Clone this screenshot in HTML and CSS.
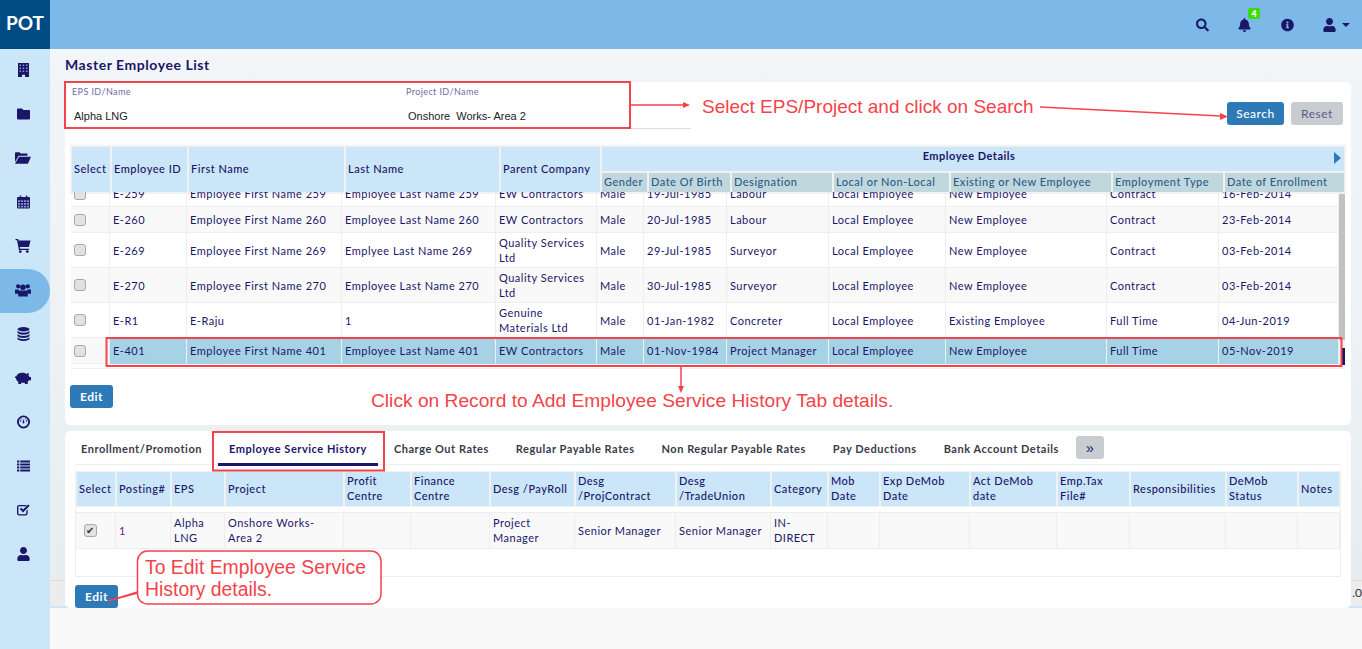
FILE: index.html
```html
<!DOCTYPE html>
<html lang="en">
<head>
<meta charset="utf-8">
<title>Master Employee List</title>
<link rel="stylesheet" href="styles.css">
</head>
<body>
<div class="app">
  <aside class="sidebar">
    <div class="logo">POT</div>
    <nav class="nav">
      <div class="nav-item"><svg class="ico narrow" viewBox="0 0 11 14"><path d="M0 0h11v14H7v-2.200H4V14H0z"/><path class="cut" d="M1.500 1.500h1.500v1.500H1.500zM4.700 1.500h1.500v1.500H4.700zM8 1.500h1.500v1.500H8zM1.500 4.500h1.500v1.500H1.500zM4.700 4.500h1.500v1.500H4.700zM8 4.500h1.500v1.500H8zM1.500 7.500h1.500v1.500H1.500zM4.700 7.500h1.500v1.500H4.700zM8 7.500h1.500v1.500H8z"/></svg></div>
      <div class="nav-item"><svg class="ico" viewBox="0 0 13 11"><path d="M1 0h4l1.500 1.500H12a1 1 0 0 1 1 1V10a1 1 0 0 1-1 1H1a1 1 0 0 1-1-1V1a1 1 0 0 1 1-1z"/></svg></div>
      <div class="nav-item"><svg class="ico wide" viewBox="0 0 18 13"><path d="M1 0h4l1.500 1.500H14V4H4L0 11V1a1 1 0 0 1 1-1z"/><path d="M4.500 5H18l-3.500 8H0z"/></svg></div>
      <div class="nav-item"><svg class="ico" viewBox="0 0 14 14"><path d="M3 0h1.500v1.500h5V0H11v1.500h2a1 1 0 0 1 1 1V13a1 1 0 0 1-1 1H1a1 1 0 0 1-1-1V2.500a1 1 0 0 1 1-1h2z"/><path class="cut" d="M1 5h2.500v2H1zM4.400 5h2.200v2H4.400zM7.500 5h2.200v2H7.500zM10.500 5H13v2h-2.500zM1 8h2.500v2H1zM4.400 8h2.200v2H4.400zM7.500 8h2.200v2H7.500zM10.500 8H13v2h-2.500zM1 11h2.500v2H1zM4.400 11h2.200v2H4.400zM7.500 11h2.200v2H7.500zM10.500 11H13v2h-2.500z"/></svg></div>
      <div class="nav-item"><svg class="ico wide" viewBox="0 0 14 13"><path d="M0 0h2.500l.5 1.500H14l-1.500 6H4l.3 1.500h8.200v1.200H3.200L1.500 1.200H0z"/><circle cx="4.500" cy="11.700" r="1.300"/><circle cx="11" cy="11.700" r="1.300"/></svg></div>
      <div class="nav-item active"><svg class="ico wide" viewBox="0 0 15 12"><circle cx="3" cy="2.500" r="2"/><circle cx="12" cy="2.500" r="2"/><circle cx="7.500" cy="3.500" r="2.600"/><path d="M0 5.500h3.500L3 9.500H0zM11.500 5.500H15v4h-3zM4 6.500h7a1 1 0 0 1 1 1V12H3V7.500a1 1 0 0 1 1-1z"/></svg></div>
      <div class="nav-item"><svg class="ico" viewBox="0 0 12 14"><ellipse cx="6" cy="2.200" rx="6" ry="2.200"/><path d="M0 3.800c1 1.300 3 2 6 2s5-.7 6-2v2c-1 1.300-3 2-6 2s-5-.7-6-2zM0 7c1 1.300 3 2 6 2s5-.7 6-2v2c-1 1.300-3 2-6 2s-5-.7-6-2zM0 10.200c1 1.300 3 2 6 2s5-.7 6-2v1.600c0 1.300-3 2.200-6 2.200s-6-.9-6-2.200z"/></svg></div>
      <div class="nav-item"><svg class="ico wide" viewBox="0 0 17 13"><path d="M7.500 1c2 0 3.500.6 4.500 1.300L14.500 1v3l1 1.500H17V9h-2l-1.500 1.500V13h-3v-1.500h-4V13h-3v-2.500C1.800 9.500 1 8 1 6.500H0V5h1.300C2 2.500 4.500 1 7.500 1z"/></svg></div>
      <div class="nav-item"><svg class="ico" viewBox="0 0 14 14"><circle cx="7" cy="7" r="6" fill="none" stroke="#1a1668" stroke-width="2"/><path d="M6 7.500l1-4 1 4a1 1 0 1 1-2 0z"/><circle cx="3.800" cy="6" r=".8"/><circle cx="10.200" cy="6" r=".8"/><circle cx="5" cy="3.800" r=".6"/><circle cx="9" cy="3.800" r=".6"/></svg></div>
      <div class="nav-item"><svg class="ico" viewBox="0 0 14 12"><path d="M0 0h2.500v2.200H0zM3.500 0H14v2.200H3.500zM0 3.300h2.500v2.200H0zM3.500 3.300H14v2.200H3.500zM0 6.500h2.500v2.200H0zM3.500 6.500H14v2.200H3.500zM0 9.800h2.500V12H0zM3.500 9.800H14V12H3.500z"/></svg></div>
      <div class="nav-item"><svg class="ico" viewBox="0 0 14 13"><path d="M2.500 1H10v1.500H2.500a1 1 0 0 0-1 1v6.500a1 1 0 0 0 1 1H9a1 1 0 0 0 1-1V7.500l1.500-1.500v4a2.500 2.500 0 0 1-2.500 2.500H2.500A2.500 2.500 0 0 1 0 10V3.500A2.500 2.500 0 0 1 2.500 1z"/><path d="M3 5.500l1.500-1.500 2 2L12 .5 13.700 2 6.500 9.200z"/></svg></div>
      <div class="nav-item"><svg class="ico" viewBox="0 0 448 512"><path d="M224 256c70.700 0 128-57.300 128-128S294.700 0 224 0 96 57.300 96 128s57.300 128 128 128zm89.600 32h-16.700c-22.200 10.200-46.900 16-72.900 16s-50.600-5.800-72.900-16h-16.700C60.200 288 0 348.200 0 422.400V464c0 26.500 21.500 48 48 48h352c26.500 0 48-21.500 48-48v-41.600c0-74.200-60.200-134.400-134.400-134.400z"/></svg></div>
    </nav>
  </aside>

  <div class="main">
    <header class="topbar">
      <svg class="top-ico" viewBox="0 0 512 512"><path d="M505 442.700L405.300 343c-4.500-4.500-10.600-7-17-7H372c27.600-35.300 44-79.700 44-128C416 93.100 322.900 0 208 0S0 93.100 0 208s93.100 208 208 208c48.300 0 92.700-16.400 128-44v16.300c0 6.400 2.500 12.500 7 17l99.700 99.700c9.400 9.400 24.600 9.400 33.900 0l28.300-28.300c9.400-9.400 9.400-24.600.1-34zM208 336c-70.700 0-128-57.200-128-128 0-70.700 57.200-128 128-128 70.700 0 128 57.200 128 128 0 70.700-57.200 128-128 128z"/></svg>
      <span class="bell">
        <svg class="top-ico" viewBox="0 0 448 512"><path d="M224 512c35.320 0 63.970-28.650 63.970-64H160.030c0 35.350 28.650 64 63.970 64zm215.390-149.710c-19.320-20.760-55.470-51.990-55.470-154.290 0-77.700-54.480-139.900-127.940-155.160V32c0-17.670-14.320-32-31.980-32s-31.980 14.330-31.980 32v20.840C118.560 68.100 64.080 130.300 64.080 208c0 102.300-36.150 133.530-55.470 154.290-6 6.450-8.660 14.160-8.610 21.710.11 16.400 12.980 32 32.100 32h383.800c19.120 0 32-15.600 32.100-32 .05-7.550-2.610-15.270-8.610-21.710z"/></svg>
        <span class="badge">4</span>
      </span>
      <svg class="top-ico" viewBox="0 0 512 512"><path d="M256 8C119 8 8 119 8 256s111 248 248 248 248-111 248-248S393 8 256 8zm0 110c23.200 0 42 18.800 42 42s-18.800 42-42 42-42-18.800-42-42 18.800-42 42-42zm56 254c0 6.600-5.400 12-12 12h-88c-6.600 0-12-5.400-12-12v-24c0-6.600 5.400-12 12-12h12v-64h-12c-6.600 0-12-5.400-12-12v-24c0-6.600 5.400-12 12-12h64c6.600 0 12 5.400 12 12v100h12c6.600 0 12 5.400 12 12v24z"/></svg>
      <span class="user-menu">
        <svg class="top-ico" viewBox="0 0 448 512"><path d="M224 256c70.700 0 128-57.300 128-128S294.700 0 224 0 96 57.300 96 128s57.300 128 128 128zm89.600 32h-16.700c-22.200 10.200-46.900 16-72.900 16s-50.600-5.800-72.900-16h-16.700C60.200 288 0 348.200 0 422.400V464c0 26.500 21.500 48 48 48h352c26.500 0 48-21.500 48-48v-41.600c0-74.200-60.200-134.400-134.400-134.400z"/></svg>
        <span class="caret"></span>
      </span>
    </header>

    <div class="content">
      <div class="footer-strip"><span class="ver">.0</span></div>
      <h1 class="page-title">Master Employee List</h1>

      <section class="card card-top">
        <div class="search-row">
          <div class="fields">
            <div class="field"><label>EPS ID/Name</label><div class="value">Alpha LNG</div></div>
            <div class="field"><label>Project ID/Name</label><div class="value">Onshore&nbsp; Works- Area 2</div></div>
          </div>
          <div class="actions">
            <button class="btn btn-primary btn-search">Search</button>
            <button class="btn btn-muted">Reset</button>
          </div>
        </div>

        <div class="grid">
          <table class="emp-head">
            <colgroup><col class="h1"><col class="h2"><col class="h3"><col class="h4"><col class="h5"><col class="h6"><col class="h7"><col class="h8"><col class="h9"><col class="h10"><col class="h11"><col class="h12"></colgroup>
            <tr class="h-top">
              <th rowspan="2">Select</th><th rowspan="2">Employee ID</th><th rowspan="2">First Name</th><th rowspan="2">Last Name</th><th rowspan="2">Parent Company</th>
              <th colspan="7" class="group">Employee Details<span class="tri"></span></th>
            </tr>
            <tr class="h-sub">
              <th>Gender</th><th>Date Of Birth</th><th>Designation</th><th>Local or Non-Local</th><th>Existing or New Employee</th><th>Employment Type</th><th>Date of Enrollment</th>
            </tr>
          </table>
          <div class="body-wrap">
            <div class="body-clip">
              <table class="emp-body">
                <colgroup><col class="b1"><col class="b2"><col class="b3"><col class="b4"><col class="b5"><col class="b6"><col class="b7"><col class="b8"><col class="b9"><col class="b10"><col class="b11"><col class="b12"></colgroup>
                <tr><td><span class="cb"></span></td><td>E-259</td><td>Employee First Name 259</td><td>Employee Last Name 259</td><td>EW Contractors</td><td>Male</td><td>19-Jul-1985</td><td>Labour</td><td>Local Employee</td><td>New Employee</td><td>Contract</td><td>16-Feb-2014</td></tr>
                <tr class="alt"><td><span class="cb"></span></td><td>E-260</td><td>Employee First Name 260</td><td>Employee Last Name 260</td><td>EW Contractors</td><td>Male</td><td>20-Jul-1985</td><td>Labour</td><td>Local Employee</td><td>New Employee</td><td>Contract</td><td>23-Feb-2014</td></tr>
                <tr><td><span class="cb"></span></td><td>E-269</td><td>Employee First Name 269</td><td>Emplyee Last Name 269</td><td>Quality Services Ltd</td><td>Male</td><td>29-Jul-1985</td><td>Surveyor</td><td>Local Employee</td><td>New Employee</td><td>Contract</td><td>03-Feb-2014</td></tr>
                <tr class="alt"><td><span class="cb"></span></td><td>E-270</td><td>Employee First Name 270</td><td>Employee Last Name 270</td><td>Quality Services Ltd</td><td>Male</td><td>30-Jul-1985</td><td>Surveyor</td><td>Local Employee</td><td>New Employee</td><td>Contract</td><td>03-Feb-2014</td></tr>
                <tr><td><span class="cb"></span></td><td>E-R1</td><td>E-Raju</td><td>1</td><td>Genuine Materials Ltd</td><td>Male</td><td>01-Jan-1982</td><td>Concreter</td><td>Local Employee</td><td>Existing Employee</td><td>Full Time</td><td>04-Jun-2019</td></tr>
                <tr class="sel"><td><span class="cb"></span></td><td>E-401</td><td>Employee First Name 401</td><td>Employee Last Name 401</td><td>EW Contractors</td><td>Male</td><td>01-Nov-1984</td><td>Project Manager</td><td>Local Employee</td><td>New Employee</td><td>Full Time</td><td>05-Nov-2019</td></tr>
              </table>
            </div>
            <div class="scrollbar"><div class="thumb"></div><div class="dark"></div></div>
          </div>
        </div>
        <button class="btn btn-primary btn-edit">Edit</button>
      </section>

      <section class="card card-bottom">
        <div class="tabs">
          <span class="tab t1">Enrollment/Promotion</span>
          <span class="tab t2 active">Employee Service History</span>
          <span class="tab t3">Charge Out Rates</span>
          <span class="tab t4">Regular Payable Rates</span>
          <span class="tab t5">Non Regular Payable Rates</span>
          <span class="tab t6">Pay Deductions</span>
          <span class="tab t7">Bank Account Details</span>
          <button class="more">»</button>
        </div>
        <div class="hist-box">
          <table class="hist">
            <colgroup><col class="s1"><col class="s2"><col class="s3"><col class="s4"><col class="s5"><col class="s6"><col class="s7"><col class="s8"><col class="s9"><col class="s10"><col class="s11"><col class="s12"><col class="s13"><col class="s14"><col class="s15"><col class="s16"><col class="s17"></colgroup>
            <tr class="hist-head">
              <th>Select</th><th>Posting#</th><th>EPS</th><th>Project</th><th>Profit Centre</th><th>Finance Centre</th><th>Desg /PayRoll</th><th>Desg /ProjContract</th><th>Desg /TradeUnion</th><th>Category</th><th>Mob Date</th><th>Exp DeMob Date</th><th>Act DeMob date</th><th>Emp.Tax File#</th><th>Responsibilities</th><th>DeMob Status</th><th>Notes</th>
            </tr>
            <tr class="hist-gap"><td colspan="17"></td></tr>
            <tr class="hist-row">
              <td><span class="cb checked">✔</span></td><td class="num">1</td><td>Alpha LNG</td><td>Onshore Works-<br>Area 2</td><td></td><td></td><td>Project Manager</td><td>Senior Manager</td><td>Senior Manager</td><td>IN-DIRECT</td><td></td><td></td><td></td><td></td><td></td><td></td><td></td>
            </tr>
          </table>
        </div>
        <button class="btn btn-primary btn-edit2">Edit</button>
      </section>
    </div>
  </div>

  <svg class="marks" viewBox="0 0 1362 649" width="1362" height="649">
    <g fill="none" stroke="#f4434b" stroke-width="2">
      <rect x="65" y="82" width="565" height="46"/>
      <rect x="106.500" y="338" width="1235" height="28"/>
      <rect x="213" y="432" width="171" height="38.500"/>
    </g>
    <g fill="none" stroke="#f4434b" stroke-width="1.500">
      <path d="M631 105H684"/>
      <path d="M1040 107L1221 116"/>
      <path d="M681 367V386"/>
      <path fill="#fff" d="M147.500 551H371a10 10 0 0 1 10 10V594a10 10 0 0 1-10 10H147.500a10 10 0 0 1-10-10V593L108 601 137.500 592V561a10 10 0 0 1 10-10z"/>
    </g>
    <g fill="#f4434b">
      <path d="M690 105L683 102V108z"/>
      <path d="M1228 116.500L1220 113V120z"/>
      <path d="M681 393L678 386H684z"/>
    </g>
  </svg>
  <div class="note note-search">Select EPS/Project and click on Search</div>
  <div class="note note-record">Click on Record to Add Employee Service History Tab details.</div>
  <div class="note note-edit">To Edit Employee Service History details.</div>
</div>
</body>
</html>
```
FILE: styles.css
```css
* { box-sizing: border-box; }
html, body { margin: 0; height: 649px; overflow: hidden; }
body { font-family: Lato, "Liberation Sans", sans-serif; color: #1a1668; background: #f9f9f9; }
.app { display: flex; width: 1362px; height: 649px; position: relative; overflow: hidden; }

.sidebar { width: 50px; flex: none; background: #cbe5f9; }
.logo { height: 49px; background: #004b84; color: #fff; font-weight: 700; font-size: 19px; line-height: 46px; text-align: center; }
.nav { display: flex; flex-direction: column; }
.nav-item { height: 44px; display: flex; align-items: center; justify-content: center; padding: 0 4px 2px 0; }
.nav-item.active { background: #7cb8e8; border-radius: 0 22px 22px 0; }
.ico { width: 13px; height: 14px; fill: #1a1668; }
.ico.wide { width: 16px; }
.ico.narrow { width: 11px; }
.ico .cut { fill: #8b93c8; }

.main { flex: 1; display: flex; flex-direction: column; min-width: 0; }
.topbar { height: 49px; flex: none; background: #7cb8e8; display: flex; align-items: center; justify-content: flex-end; padding-right: 12px; }
.top-ico { width: 13px; height: 14px; fill: #1a1668; display: block; }
.topbar > .top-ico:first-child { margin-right: 29px; }
.bell { position: relative; margin-right: 30px; }
.badge { position: absolute; left: 10px; top: -10px; width: 12px; height: 11px; border-radius: 2px; background: #3bdc0e; color: #fff; font-size: 9px; font-weight: 900; line-height: 11px; text-align: center; }
.user-menu { display: flex; align-items: center; gap: 6px; margin-left: 29px; }
.caret { width: 0; height: 0; border-left: 4px solid transparent; border-right: 4px solid transparent; border-top: 4px solid #1a1668; }

.content { height: 559px; padding: 0 11px 0 15px; background: linear-gradient(#f3f6f9, #e7edef); position: relative; }
.footer-strip { position: absolute; left: 0; right: 0; top: 531px; height: 28px; background: #ececec; border-bottom: 2px solid #cbe5f9; border-top: 1px solid #ddd; }
.ver { position: absolute; right: 0; top: 4px; font-size: 12px; color: #333; }
.page-title { margin: 0; height: 33px; padding-top: 7px; font-size: 14px; line-height: 17px; font-weight: 700; letter-spacing: .55px; color: #1a1668; }

.card { background: #fff; border-radius: 5px; position: relative; }
.card-top { height: 343px; padding: 0 6px; }
.card-bottom { height: 177px; margin-top: 6px; padding: 0 10px; }

.search-row { height: 63px; display: flex; justify-content: space-between; }
.fields { width: 619px; height: 47px; display: flex; border-bottom: 1px solid #ddd; margin-left: 1px; }
.field { width: 334px; flex: none; padding-top: 4px; }
.field label { display: block; font-size: 9px; line-height: 11px; letter-spacing: .4px; color: #6f6aa4; }
.value { font-family: "Liberation Sans", Arial, sans-serif; font-size: 11px; line-height: 13px; margin-top: 13px; padding-left: 2px; color: #222; }
.actions { display: flex; gap: 7px; padding-top: 20px; padding-right: 2px; }
.btn { border: 0; border-radius: 3px; font-family: Lato, sans-serif; font-size: 12px; letter-spacing: .5px; height: 23px; padding: 0; }
.btn-primary { background: #2e7ab6; color: #fff; font-weight: 700; }
.btn-search { width: 57px; font-weight: 500; }
.btn-muted { background: #c9ccd1; color: #5c5a86; width: 52px; }
.btn-edit { width: 43px; margin: 16px 0 0 -1px; }
.btn-edit2 { width: 43px; }

table { border-collapse: separate; table-layout: fixed; }
th, td { overflow: hidden; text-align: left; }

.grid { width: 1274px; }
.emp-head { width: 1276px; margin-left: -1px; border-spacing: 2px; background: #f1f1f1; }
.h1 { width: 38px; } .h2 { width: 75px; } .h3 { width: 155px; } .h4 { width: 153px; } .h5 { width: 99px; }
.h6 { width: 45px; } .h7 { width: 81px; } .h8 { width: 100px; } .h9 { width: 115px; } .h10 { width: 160px; } .h11 { width: 110px; } .h12 { width: 119px; }
.emp-head th { font-size: 11px; line-height: 14px; letter-spacing: .5px; font-weight: 500; padding: 0 2px 2px; white-space: nowrap; }
.h-top th { background: #cbe5f9; height: 24px; color: #1a1668; }
.emp-head .group { font-weight: 700; font-size: 11px; vertical-align: top; padding: 2px 8px 0 0; text-align: center; position: relative; }
.tri { position: absolute; right: 3px; top: 5px; width: 0; height: 0; border-top: 6.500px solid transparent; border-bottom: 6.500px solid transparent; border-left: 7px solid #2e7ab6; }
.h-sub th { background: #c1d7de; height: 19px; color: #2c5d86; }

.body-wrap { display: flex; height: 177px; border-bottom: 1px solid #eee; margin-top: -2px; position: relative; }
.body-clip { width: 1268px; overflow: hidden; }
.emp-body { width: 1268px; border-spacing: 0; margin-top: -11px; }
.b1 { width: 39px; } .b2 { width: 77px; } .b3 { width: 155px; } .b4 { width: 154px; } .b5 { width: 101px; }
.b6 { width: 47px; } .b7 { width: 83px; } .b8 { width: 102px; } .b9 { width: 117px; } .b10 { width: 161px; } .b11 { width: 112px; } .b12 { width: 120px; }
.emp-body td { font-size: 11px; line-height: 15px; letter-spacing: .5px; padding: 2px 3px; height: 26px; border-bottom: 1px solid #eee; border-right: 1px solid #eee; color: #1a1668; }
.alt td { background: #f9f9f9; }
.emp-body .sel td { background: #a6d2e6; border-right-color: #e8f3f8; border-bottom-color: #a6d2e6; }
.emp-body .sel td:first-child { background: #f9f9f9; border-right-color: #eee; border-bottom-color: #eee; }
.cb { display: block; width: 12px; height: 12px; border: 1px solid #a9a9a9; border-radius: 3px; background: #e2e2e2; }
.cb.checked { color: #333; font-size: 10px; line-height: 11px; text-align: center; width: 13px; height: 13px; margin-left: 5px; }
.scrollbar { width: 6px; flex: none; background: #f1f1f1; position: relative; }
.thumb { position: absolute; left: 0; right: 0; top: 2px; height: 146px; background: #c1c1c1; }
.dark { position: absolute; left: 2px; right: 0; top: 156px; height: 17px; background: #1a1668; }

.tabs { height: 34px; display: flex; align-items: flex-start; border-bottom: 1px solid #eee; position: relative; }
.tab { font-size: 11px; line-height: 14px; letter-spacing: .53px; font-weight: 700; color: #3a3a4a; margin: 11px 0 0 27px; white-space: nowrap; }
.tab.t1 { margin-left: 6px; }
.tab.active { color: #1a1668; }
.tab.active::after { content: ""; position: absolute; left: 143px; top: 32px; width: 160px; height: 3px; background: #1a1668; }
.more { width: 28px; height: 23px; margin-left: 17px; margin-top: 5px; border: 0; border-radius: 3px; background: #c9ccd1; color: #1a1668; font-size: 14px; line-height: 18px; padding: 0; }

.hist-box { margin-top: 6px; width: 1266px; height: 106px; border: 1px solid #eee; border-top: 0; margin-bottom: 8px; }
.hist { width: 1264px; border-spacing: 0; }
.s1 { width: 40px; } .s2 { width: 55px; } .s3 { width: 54px; } .s4 { width: 119px; } .s5 { width: 67px; } .s6 { width: 79px; } .s7 { width: 85px; } .s8 { width: 101px; } .s9 { width: 95px; } .s10 { width: 57px; } .s11 { width: 52px; } .s12 { width: 90px; } .s13 { width: 87px; } .s14 { width: 73px; } .s15 { width: 96px; } .s16 { width: 72px; } .s17 { width: 42px; }
.hist th { background: #cbe5f9; font-size: 11px; line-height: 15px; letter-spacing: .5px; font-weight: 500; height: 36px; padding: 0 2px 2px; border: 1px solid #f1f1f1; color: #1a1668; }
.hist-gap td { height: 6px; background: #fff; border-bottom: 1px solid #eee; padding: 0; }
.hist-row td { background: #f9f9f9; font-size: 11px; line-height: 15px; letter-spacing: .5px; height: 35px; padding: 2px 3px 3px; border-right: 1px solid #eee; border-bottom: 1px solid #eee; color: #1a1668; }
.hist-row .num { color: #6a1a8a; }

.marks { position: absolute; left: 0; top: 0; pointer-events: none; }
.note { position: absolute; font-family: "Liberation Sans", Arial, sans-serif; font-size: 19px; line-height: 22px; color: #f4434b; white-space: nowrap; }
.note-search { left: 702px; top: 96px; }
.note-record { left: 371px; top: 390px; font-size: 19.200px; }
.note-edit { left: 145px; top: 556px; width: 232px; font-size: 19.400px; white-space: normal; }
```
